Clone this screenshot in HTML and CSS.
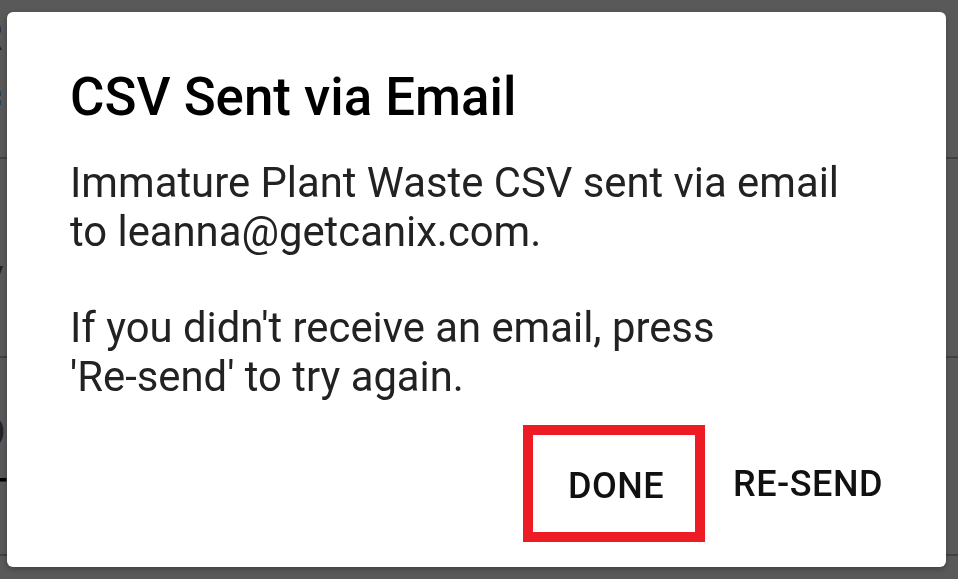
FILE: index.html
```html
<!DOCTYPE html>
<html>
<head>
<meta charset="utf-8">
<link rel="stylesheet" href="styles.css">
</head>
<body>
<div class="page">
  <div class="row row-a">
    <span class="bg-text soft">R</span>
    <span class="bg-text eq">=</span>
  </div>
  <div class="row row-b">
    <span class="bg-text soft v">V</span>
  </div>
  <div class="row row-c">
    <span class="bg-text soft o">O</span>
    <span class="bg-text strong">T</span>
  </div>
</div>
<div class="overlay">
  <div class="dialog">
    <h1 class="title">CSV Sent via Email</h1>
    <p class="msg">Immature Plant Waste CSV sent via email<br>to leanna@getcanix.com.</p>
    <p class="msg msg-last">If you didn't receive an email, press<br>'Re-send' to try again.</p>
    <div class="actions">
      <button class="btn btn-done">DONE</button>
      <button class="btn btn-resend">RE-SEND</button>
    </div>
  </div>
</div>
</body>
</html>
```
FILE: styles.css
```css
* { box-sizing: border-box; }
html, body { margin: 0; padding: 0; }
body {
  width: 958px;
  height: 579px;
  overflow: hidden;
  background: #fff;
  font-family: Roboto, "Noto Sans", sans-serif;
}
.page {
  display: flex;
  flex-direction: column;
}
.row {
  display: flex;
  flex-direction: column;
  border-bottom: 2px solid #bbb;
}
.row-a { height: 159px; padding-top: 14px; }
.row-b { height: 199px; padding-top: 100px; }
.row-c { height: 198px; padding-top: 52px; }
.bg-text {
  font-size: 40px;
  line-height: 46px;
  margin-left: -22px;
  color: #555;
}
.soft { color: #666; }
.eq { color: #000; font-size: 44px; margin-top: 14px; font-weight: 700; }
.strong { color: #000; font-size: 46px; margin-top: 16px; margin-left: -20px; }
.overlay {
  position: fixed;
  inset: 0;
  background: rgba(0, 0, 0, 0.65);
  padding: 12px 12px 12px 7px;
}
.dialog {
  width: 939px;
  height: 555px;
  background: #fff;
  border-radius: 6px;
  box-shadow: 0 2px 6px rgba(0,0,0,0.3);
  padding: 54px 63px 0 63px;
  display: flex;
  flex-direction: column;
}
.title {
  margin: 0 0 30px 0;
  font-size: 52.8px;
  font-weight: 500;
  line-height: 62px;
  color: #000;
}
.msg {
  margin: 0 0 47px 0;
  font-size: 41.8px;
  line-height: 49px;
  color: #222;
}
.msg-last { margin-bottom: 24px; }
.actions {
  display: flex;
  justify-content: flex-end;
  align-items: center;
  gap: 28px;
}
.btn {
  font-family: Roboto, sans-serif;
  font-size: 36px;
  font-weight: 500;
  letter-spacing: 0.5px;
  color: #111;
  background: none;
  border: none;
  padding: 0;
  margin: 0;
}
.btn-done {
  border: 10px solid #ed1c24;
  height: 117px;
  width: 182px;
  padding-top: 4px;
  padding-left: 4px;
}
```
